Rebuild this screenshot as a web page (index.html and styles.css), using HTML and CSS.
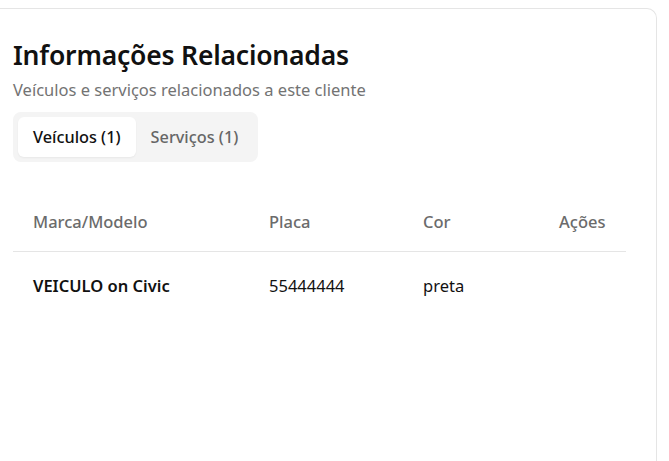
FILE: index.html
```html
<!DOCTYPE html>
<html lang="pt-BR">
<head>
<meta charset="utf-8">
<title>Informações Relacionadas</title>
<link rel="stylesheet" href="styles.css">
</head>
<body>
<section class="card">
  <header class="card-header">
    <h2 class="card-title">Informações Relacionadas</h2>
    <p class="card-desc">Veículos e serviços relacionados a este cliente</p>
  </header>
  <div class="tabs">
    <button class="tab tab-active">Veículos (1)</button>
    <button class="tab">Serviços (1)</button>
  </div>
  <table class="table">
    <thead>
      <tr>
        <th class="col-model">Marca/Modelo</th>
        <th class="col-plate">Placa</th>
        <th class="col-color">Cor</th>
        <th class="col-actions">Ações</th>
      </tr>
    </thead>
    <tbody>
      <tr>
        <td class="cell-strong">VEICULO on Civic</td>
        <td>55444444</td>
        <td>preta</td>
        <td></td>
      </tr>
    </tbody>
  </table>
</section>
</body>
</html>
```

FILE: styles.css
```css
* { box-sizing: border-box; }
html, body { margin: 0; padding: 0; background: #ffffff; }
body {
  font-family: "Noto Sans", "Open Sans", sans-serif;
  color: #111111;
  padding-top: 8px;
  padding-right: 12px;
  overflow: hidden;
  height: 461px;
}
.card {
  border: 1px solid #e5e5e5;
  border-left: 0;
  border-radius: 0 10px 0 0;
  border-bottom: 0;
  padding: 28px 30px 0 13px;
  min-height: 460px;
}
.card-header { margin: 0; }
.card-title {
  margin: 0;
  font-size: 26.5px;
  font-weight: 600;
  line-height: 36px;
  color: #111111;
  letter-spacing: -0.2px;
}
.card-desc {
  margin: 6px 0 0 0;
  font-size: 16.5px;
  line-height: 22px;
  color: #737373;
}
.tabs {
  display: inline-flex;
  margin-top: 11px;
  padding: 5px;
  background: #f4f4f4;
  border-radius: 8px;
  gap: 0;
}
.tab {
  font-family: inherit;
  border: 0;
  background: transparent;
  font-size: 16.3px;
  font-weight: 500;
  color: #666666;
  height: 40px;
  padding: 0 15px;
  border-radius: 6px;
  cursor: pointer;
}
.tab-active {
  background: #ffffff;
  color: #111111;
  box-shadow: 0 1px 2px rgba(0,0,0,0.05);
}
.table {
  width: 100%;
  margin-top: 31px;
  border-collapse: collapse;
  font-size: 16.5px;
}
.table th {
  text-align: left;
  font-weight: 500;
  color: #6b6b6b;
  padding: 16px 20px 16px 20px;
  line-height: 26px;
  border-bottom: 1px solid #e5e5e5;
}
.table td {
  padding: 21px 20px;
  line-height: 26px;
  color: #111111;
}
.col-model { width: 236px; }
.col-plate { width: 154px; }
.col-color { width: 136px; }
.cell-strong { font-weight: 600; }
```
